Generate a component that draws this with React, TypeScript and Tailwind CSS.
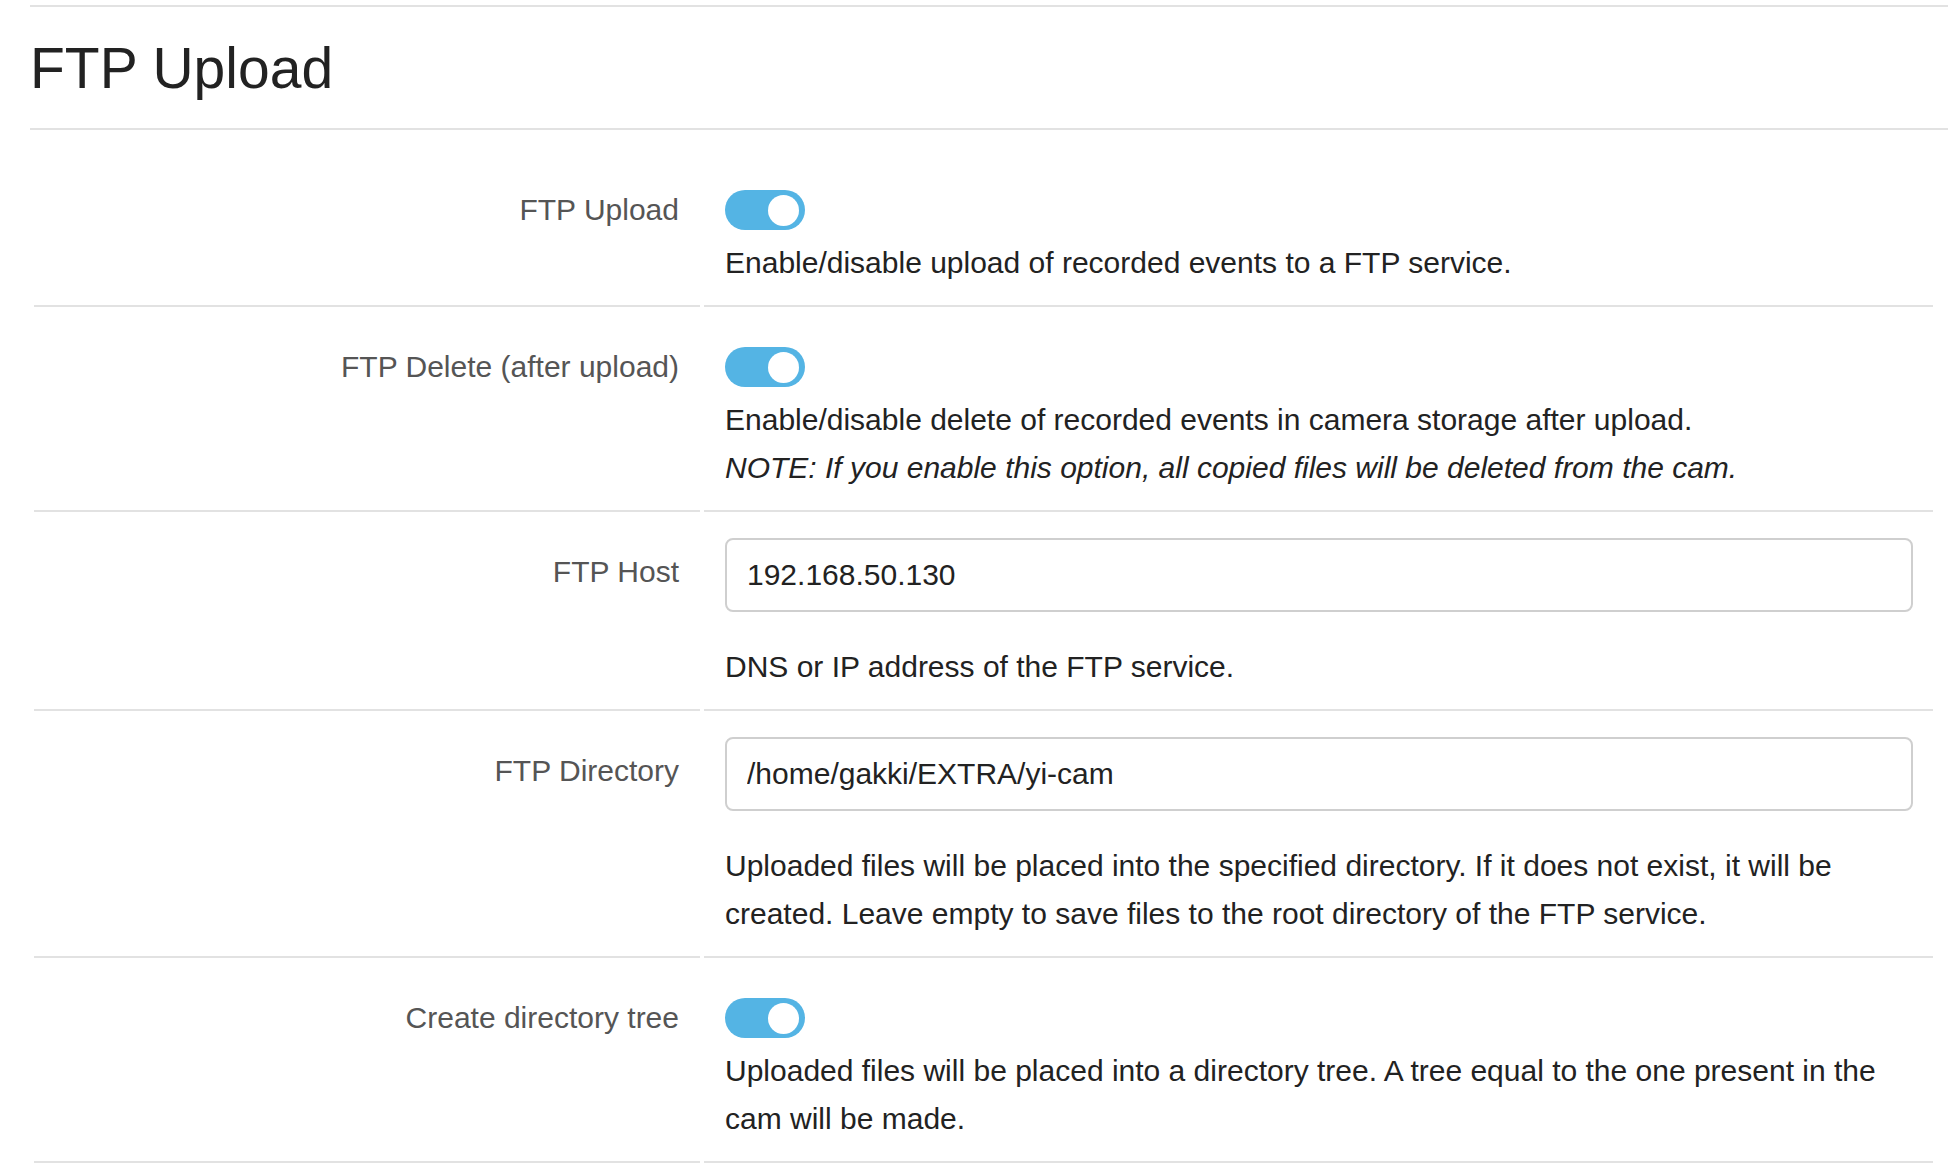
import React from 'react';

type Row = {
    label: string;
    kind: 'toggle' | 'input';
    value?: string;
    lines: React.ReactNode;
};

const rows: Row[] = [
    {
        label: 'FTP Upload',
        kind: 'toggle',
        lines: <p>Enable/disable upload of recorded events to a FTP service.</p>,
    },
    {
        label: 'FTP Delete (after upload)',
        kind: 'toggle',
        lines: (
            <>
                <p>Enable/disable delete of recorded events in camera storage after upload.</p>
                <p className="italic">NOTE: If you enable this option, all copied files will be deleted from the cam.</p>
            </>
        ),
    },
    {
        label: 'FTP Host',
        kind: 'input',
        value: '192.168.50.130',
        lines: <p>DNS or IP address of the FTP service.</p>,
    },
    {
        label: 'FTP Directory',
        kind: 'input',
        value: '/home/gakki/EXTRA/yi-cam',
        lines: (
            <p>
                Uploaded files will be placed into the specified directory. If it does not exist, it will be
                created. Leave empty to save files to the root directory of the FTP service.
            </p>
        ),
    },
    {
        label: 'Create directory tree',
        kind: 'toggle',
        lines: (
            <p>
                Uploaded files will be placed into a directory tree. A tree equal to the one present in the cam
                will be made.
            </p>
        ),
    },
];

function Toggle() {
    return (
        <div className="mt-[14px] flex h-[40px] w-[80px] items-center justify-end rounded-full bg-[#54b4e4] pr-[6px]">
            <span className="h-[31px] w-[31px] rounded-full bg-white" />
        </div>
    );
}

export default function App() {
    return (
        <div className="min-h-screen bg-white pl-[30px] font-['Liberation_Sans',Arial,sans-serif] text-[#222]">
            {/* Page header */}
            <div className="mt-[5px] border-t-2 border-b-2 border-[#e2e2e2] pt-[32px] pb-[31px]">
                <h2 className="text-[57px] leading-[58px] font-normal text-[#222]">FTP Upload</h2>
            </div>

            {/* Settings table */}
            <div className="mt-[20px] ml-[4px] mr-[15px] grid grid-cols-[666px_1fr] gap-x-[4px] text-[30px] leading-[48px]">
                {rows.map((row) => (
                    <React.Fragment key={row.label}>
                        <div className="border-b-2 border-[#e2e2e2] pt-[36px] pr-[21px] text-right text-[#555]">
                            {row.label}
                        </div>
                        <div className="border-b-2 border-[#e2e2e2] pt-[26px] pb-[18px] pl-[21px] pr-[20px]">
                            {row.kind === 'toggle' ? (
                                <>
                                    <Toggle />
                                    <div className="mt-[9px]">{row.lines}</div>
                                </>
                            ) : (
                                <>
                                    <input
                                        readOnly
                                        defaultValue={row.value}
                                        className="block h-[74px] w-full rounded-[8px] border-2 border-[#cfcfcf] px-[20px] text-[30px] text-[#222] outline-none"
                                    />
                                    <div className="mt-[31px]">{row.lines}</div>
                                </>
                            )}
                        </div>
                    </React.Fragment>
                ))}
            </div>
        </div>
    );
}
